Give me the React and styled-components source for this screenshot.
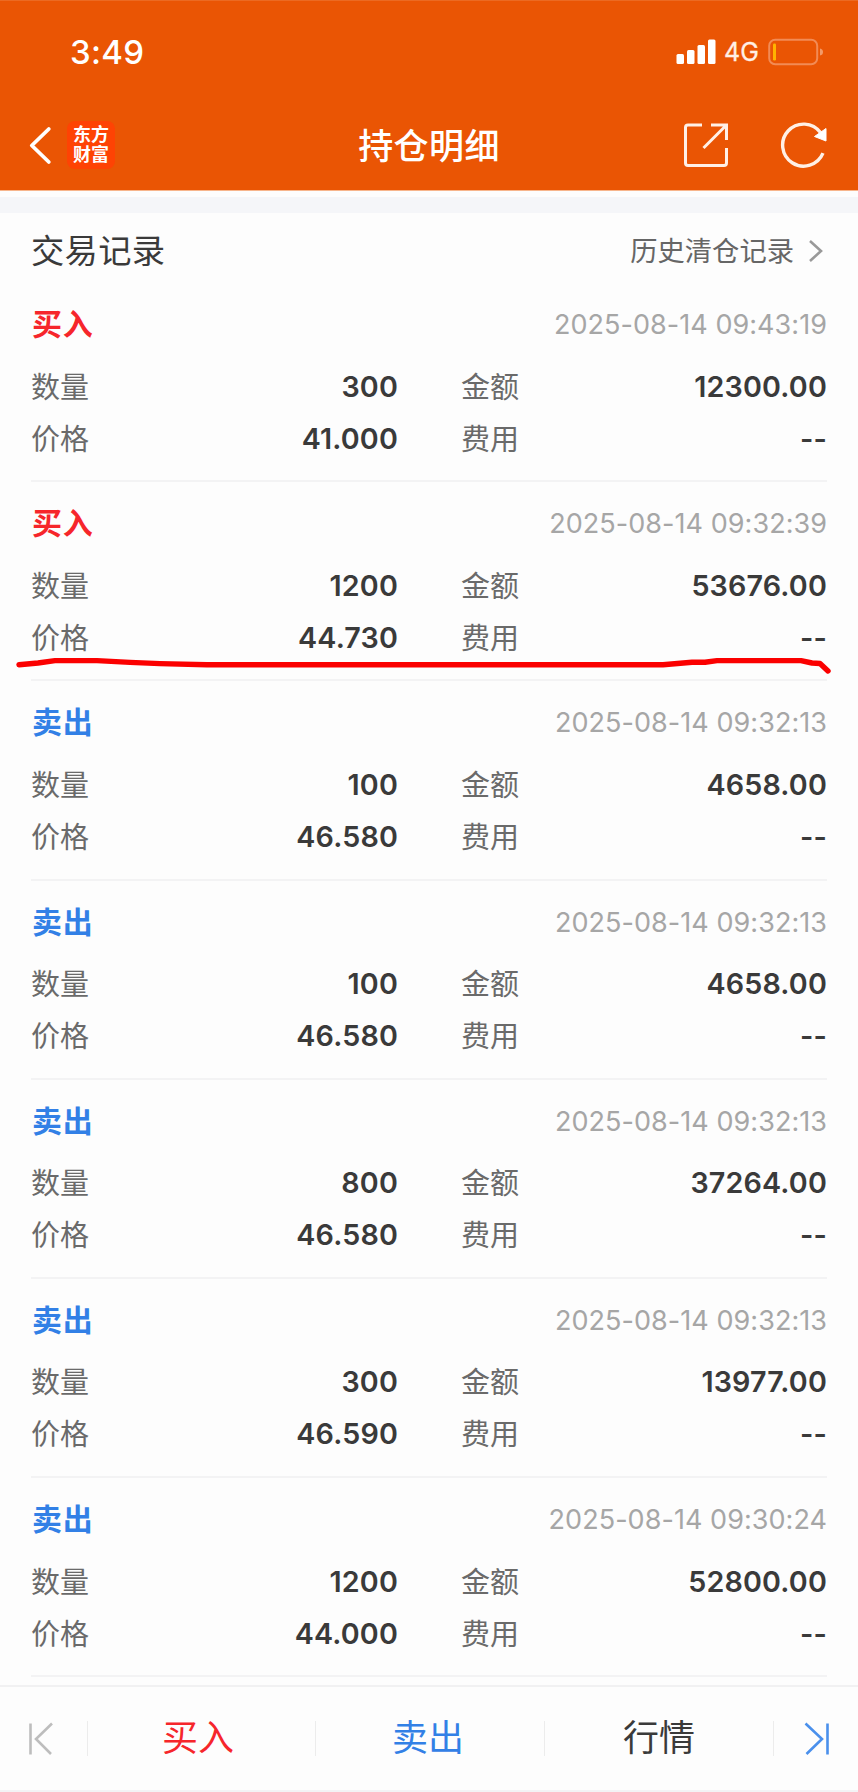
import React from "react";
import styled, { createGlobalStyle } from "styled-components";

const GlobalStyle = createGlobalStyle`
  * { box-sizing: border-box; }
  body { margin: 0; background: #fdfdfd; }
`;

const RED = "#f6262b";
const BLUE = "#3280e6";

const Page = styled.div`
  position: relative;
  display: flex;
  flex-direction: column;
  width: 858px;
  height: 1792px;
  overflow: hidden;
  background: #fdfdfd;
  color: #3a3a3a;
  font-family: Inter, "Noto Sans CJK SC", sans-serif;
`;

const Header = styled.header`
  height: 191px;
  flex: none;
  background: #ea5504;
  border-top: 1px solid #ec6a22;
  border-bottom: 1px solid #f7b58c;
  color: #fff;
`;

const StatusBar = styled.div`
  display: flex;
  align-items: center;
  justify-content: space-between;
  height: 101px;
  padding: 0 34px 0 70px;
`;

const Clock = styled.span`
  font-size: 33px;
  font-weight: 500;
  letter-spacing: 0.3px;
`;

const StatusIcons = styled.div`
  display: flex;
  align-items: center;
`;

const Network = styled.span`
  width: 44px;
  margin-left: 8px;
  font-size: 25px;
  line-height: 30px;
  color: #fff0e6;
  -webkit-text-stroke: 0.3px #fff0e6;
`;

const NavBar = styled.div`
  display: grid;
  grid-template-columns: 1fr auto 1fr;
  align-items: center;
  height: 86px;
  padding: 0 30px 0 28px;
`;

const NavSide = styled.div`
  display: flex;
  align-items: center;
  justify-content: ${(p) => (p.$end ? "flex-end" : "flex-start")};
  gap: ${(p) => p.$gap}px;
`;

const Logo = styled.div`
  width: 48px;
  height: 48px;
  padding-top: 4px;
  border-radius: 8px;
  background: #fe4304;
  font-size: 18px;
  font-weight: 700;
  line-height: 20px;
  text-align: center;
  white-space: pre-line;
`;

const Title = styled.h1`
  margin: 0;
  padding: 0 0 3px 2px;
  font-size: 35px;
  font-weight: 500;
  letter-spacing: 0.4px;
`;

const Band = styled.div`
  flex: none;
  height: 22px;
  border-top: 6px solid #fdfdfd;
  background: #f5f6f9;
`;

const SectionHead = styled.div`
  display: flex;
  flex: none;
  align-items: center;
  justify-content: space-between;
  height: 69px;
  padding: 3px 34px 0 31px;
`;

const SectionTitle = styled.h2`
  margin: 0;
  padding-bottom: 1px;
  font-size: 33.3px;
  font-weight: 400;
  letter-spacing: 0.3px;
`;

const HistoryLink = styled.a`
  display: flex;
  align-items: center;
  gap: 14px;
  font-size: 27.3px;
  color: #666;

  svg {
    margin-top: 4px;
  }
`;

const Records = styled.main`
  flex: none;
  padding: 1px 31px 0;
`;

const Record = styled.section`
  height: 199.2px;
  padding-top: 11px;
  border-bottom: 2px solid #f3f3f4;
`;

const RecordHead = styled.div`
  display: flex;
  align-items: center;
  justify-content: space-between;
  height: 61px;
`;

const Side = styled.span`
  padding: 0 0 5px 1px;
  font-size: 30px;
  font-weight: 700;
  letter-spacing: 0.8px;
  color: ${(p) => (p.$buy ? RED : BLUE)};
`;

const Time = styled.time`
  font-size: 27px;
  letter-spacing: 0.05px;
  color: #a6a6a6;
`;

const Fields = styled.div`
  display: grid;
  grid-template-columns: 367px 366px;
  column-gap: 63px;
  grid-auto-rows: 52px;
  padding-top: 5px;
`;

const Field = styled.div`
  display: flex;
  align-items: center;
  justify-content: space-between;
`;

const Label = styled.span`
  padding-bottom: 3px;
  font-size: 29px;
  color: #6a6a6a;
`;

const Value = styled.span`
  font-size: 28.7px;
  font-weight: 600;
  letter-spacing: 0.15px;
`;

const BottomBar = styled.nav`
  display: grid;
  grid-template-columns: 88px 228px 229px 229px 84px;
  align-items: center;
  height: 107px;
  margin-top: auto;
  border-top: 2px solid #f1f1f2;
  border-bottom: 2px solid #f3f3f5;
`;

const Tab = styled.div`
  display: flex;
  align-items: center;
  justify-content: center;
  height: 35px;
  padding-left: ${(p) => p.$shift || 0}px;
  padding-right: ${(p) => p.$inset || 0}px;
  border-right: ${(p) => (p.$last ? "none" : "1px solid #ececec")};
  font-size: 36px;
  line-height: 35px;
  color: ${(p) => p.$color};
`;

const Marker = styled.svg`
  position: absolute;
  left: 0;
  top: 650px;
`;

const records = [
  ["买入", "2025-08-14 09:43:19", "300", "12300.00", "41.000"],
  ["买入", "2025-08-14 09:32:39", "1200", "53676.00", "44.730"],
  ["卖出", "2025-08-14 09:32:13", "100", "4658.00", "46.580"],
  ["卖出", "2025-08-14 09:32:13", "100", "4658.00", "46.580"],
  ["卖出", "2025-08-14 09:32:13", "800", "37264.00", "46.580"],
  ["卖出", "2025-08-14 09:32:13", "300", "13977.00", "46.590"],
  ["卖出", "2025-08-14 09:30:24", "1200", "52800.00", "44.000"],
];

const SignalIcon = () => (
  <svg width="40" height="26" viewBox="0 0 40 26" fill="#fff">
    <rect x="0.5" y="15" width="7.5" height="10" rx="1.5" />
    <rect x="11" y="11" width="7.5" height="14" rx="1.5" />
    <rect x="21.5" y="6" width="7.5" height="19" rx="1.5" />
    <rect x="32" y="0.5" width="7.5" height="24.5" rx="1.5" />
  </svg>
);

const BatteryIcon = () => (
  <svg width="56" height="28" viewBox="0 0 56 28" fill="none">
    <rect x="1.2" y="1.7" width="48" height="24.5" rx="6" stroke="#f28b55" strokeWidth="2" />
    <rect x="5" y="5.5" width="3" height="17" rx="1.3" fill="#ffb300" />
    <path d="M52 10.5Q55 11 55 14T52 17.5Z" fill="#f39a68" />
  </svg>
);

const BackIcon = () => (
  <svg width="24" height="40" viewBox="0 0 24 40" fill="none" stroke="#fff" strokeWidth="3.8" strokeLinecap="round" strokeLinejoin="round">
    <path d="M20.8 4L3.8 20.5L20.8 37" />
  </svg>
);

const ShareIcon = () => (
  <svg width="46" height="46" viewBox="0 0 46 46" fill="none" stroke="#fff0e6" strokeWidth="3">
    <path d="M19 3H5Q2.5 3 2.5 5.5V41Q2.5 43.5 5 43.5H41Q43.5 43.5 43.5 41V26" />
    <path d="M28 3H43.5V18M42.5 4L20.5 26" />
  </svg>
);

const RefreshIcon = () => (
  <svg width="48" height="48" viewBox="0 0 48 48" fill="none">
    <path d="M43 32.2A21 21 0 1 1 40.5 11.6" stroke="#fff0e6" strokeWidth="3.4" />
    <path d="M34.5 15.5L46 7.5V20Z" fill="#fff" stroke="#fff" strokeLinejoin="round" />
  </svg>
);

const EdgeIcon = ({ flip, color }) => (
  <svg width="26" height="34" viewBox="0 0 26 34" fill="none" stroke={color} strokeWidth="2.6">
    {flip ? (
      <path d="M1.5 1.5L18 17L2.5 32M23.5 1.5V32.5" />
    ) : (
      <path d="M24 1.5L8 17L23 32M2.5 1.5V32.5" />
    )}
  </svg>
);

export default function App() {
  return (
    <Page>
      <GlobalStyle />
      <Header>
        <StatusBar>
          <Clock>3:49</Clock>
          <StatusIcons>
            <SignalIcon />
            <Network>4G</Network>
            <BatteryIcon />
          </StatusIcons>
        </StatusBar>
        <NavBar>
          <NavSide $gap={15}>
            <BackIcon />
            <Logo>{"东方\n财富"}</Logo>
          </NavSide>
          <Title>持仓明细</Title>
          <NavSide $end $gap={51}>
            <ShareIcon />
            <RefreshIcon />
          </NavSide>
        </NavBar>
      </Header>
      <Band />
      <SectionHead>
        <SectionTitle>交易记录</SectionTitle>
        <HistoryLink>
          历史清仓记录
          <svg width="16" height="24" viewBox="0 0 16 24" fill="none" stroke="#999" strokeWidth="2.6">
            <path d="M2 2L13 12L2 22" />
          </svg>
        </HistoryLink>
      </SectionHead>
      <Records>
        {records.map(([side, time, count, amount, price], i) => (
          <Record key={i}>
            <RecordHead>
              <Side $buy={side === "买入"}>{side}</Side>
              <Time>{time}</Time>
            </RecordHead>
            <Fields>
              <Field><Label>数量</Label><Value>{count}</Value></Field>
              <Field><Label>金额</Label><Value>{amount}</Value></Field>
              <Field><Label>价格</Label><Value>{price}</Value></Field>
              <Field><Label>费用</Label><Value>--</Value></Field>
            </Fields>
          </Record>
        ))}
      </Records>
      <BottomBar>
        <Tab $inset={5}><EdgeIcon color="#bdbdbd" /></Tab>
        <Tab $color={RED} $inset={7}>买入</Tab>
        <Tab $color={BLUE} $inset={4}>卖出</Tab>
        <Tab $color="#3a3a3a">行情</Tab>
        <Tab $last $shift={2}><EdgeIcon flip color="#4a90ec" /></Tab>
      </BottomBar>
      <Marker width="858" height="30" viewBox="0 650 858 30" fill="none" stroke="#fb0000" strokeWidth="5.4" strokeLinecap="round" strokeLinejoin="round">
        <path d="M19 664.8L38 663L55 660.6H97L130 662.4L160 663.6L207 664.8H663L692 662.2H705L717 660.6H801L812 663L820 663.5L828 671" />
      </Marker>
    </Page>
  );
}
